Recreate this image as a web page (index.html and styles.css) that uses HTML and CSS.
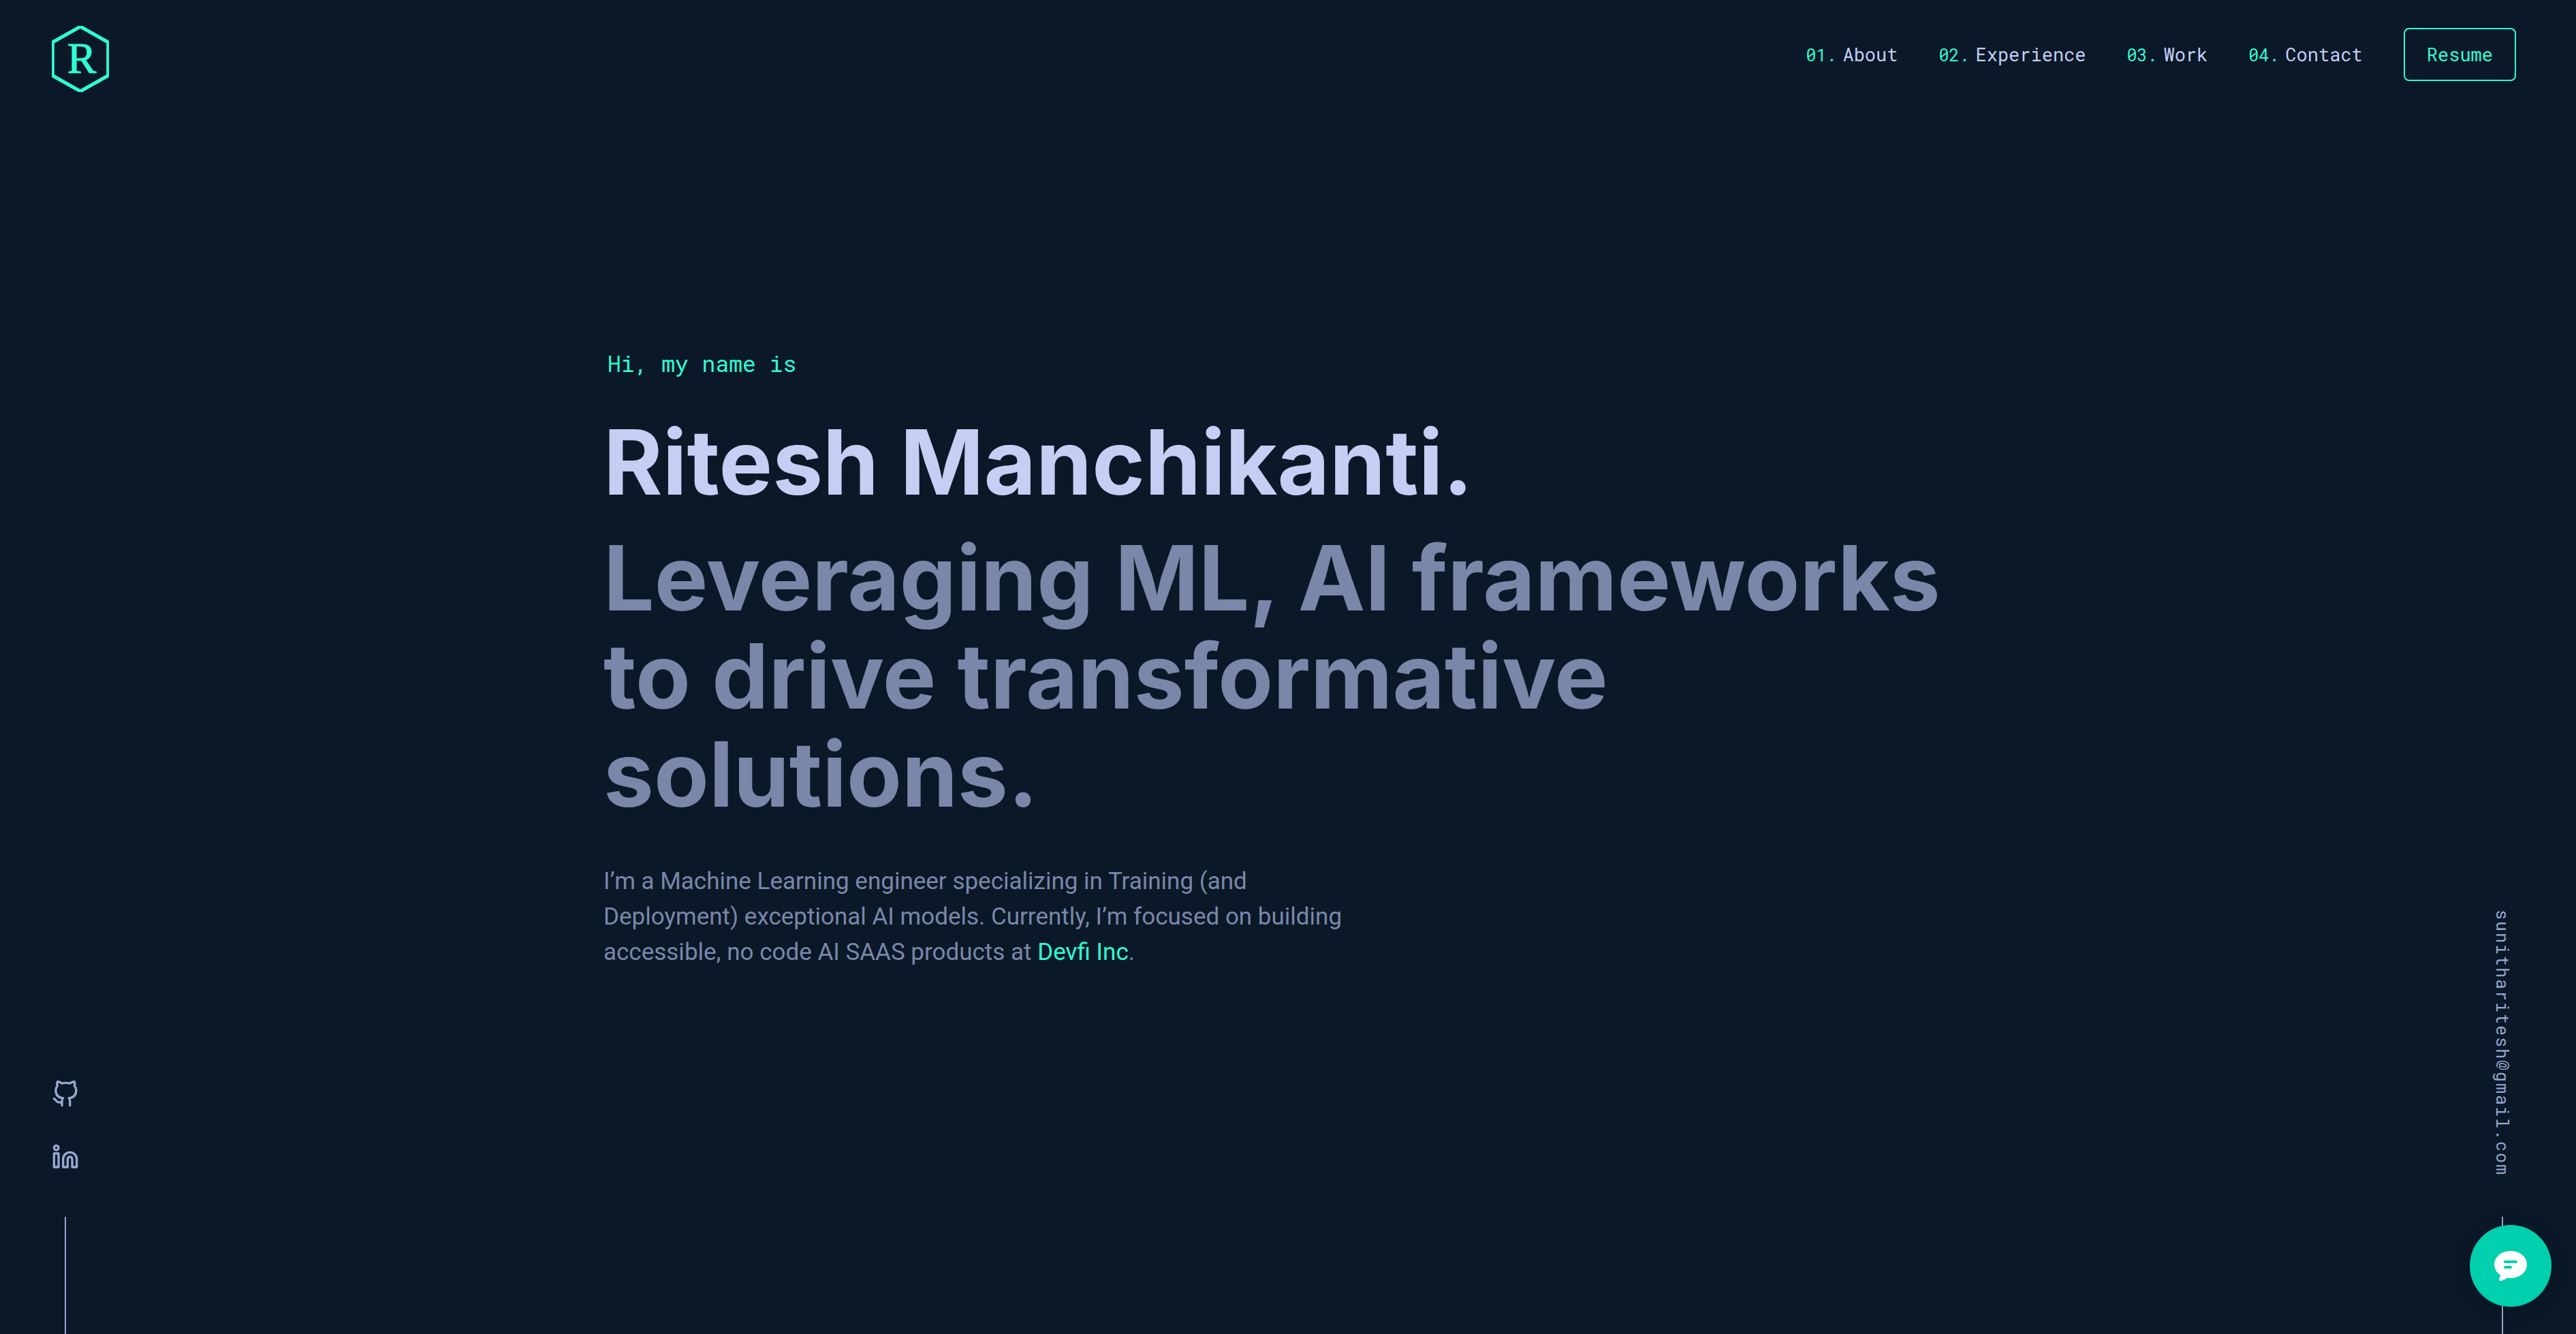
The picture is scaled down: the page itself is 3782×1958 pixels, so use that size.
FILE: index.html
```
<!DOCTYPE html>
<html lang="en">
<head>
  <meta charset="utf-8">
  <meta name="viewport" content="width=device-width, initial-scale=1">
  <title>Ritesh Manchikanti</title>
  <link rel="stylesheet" href="styles.css">
</head>
<body>
  <header class="site-header">
    <a class="logo" href="#" aria-label="Home">
      <svg viewBox="0 0 84 97" width="84" height="97">
        <polygon points="42,1 82.7,24 82.7,73 42,96 1.3,73 1.3,24" fill="none" stroke="currentColor" stroke-width="5"/>
        <text class="logo-letter" x="44" y="69" text-anchor="middle">R</text>
      </svg>
    </a>
    <nav class="site-nav">
      <ol class="nav-list">
        <li><a class="nav-link" href="#about"><span class="nav-number">01.</span>About</a></li>
        <li><a class="nav-link" href="#experience"><span class="nav-number">02.</span>Experience</a></li>
        <li><a class="nav-link" href="#work"><span class="nav-number">03.</span>Work</a></li>
        <li><a class="nav-link" href="#contact"><span class="nav-number">04.</span>Contact</a></li>
      </ol>
      <a class="resume-button" href="#resume">Resume</a>
    </nav>
  </header>

  <main class="hero">
    <p class="greeting">Hi, my name is</p>
    <h1 class="headline">Ritesh Manchikanti.</h1>
    <h2 class="headline tagline">Leveraging ML, AI frameworks to drive transformative solutions.</h2>
    <p class="intro">I’m a Machine Learning engineer specializing in Training (and Deployment) exceptional AI models. Currently, I’m focused on building accessible, no code AI SAAS products at <a class="intro-link" href="#devfi">Devfi Inc</a>.</p>
  </main>

  <aside class="rail rail-left">
    <a class="social" href="#github" aria-label="GitHub">
      <svg class="icon" viewBox="0 0 24 24">
        <path d="M9 19c-5 1.5-5-2.5-7-3m14 6v-3.87a3.37 3.37 0 0 0-.94-2.61c3.14-.35 6.44-1.54 6.44-7A5.44 5.44 0 0 0 20 4.77 5.07 5.07 0 0 0 19.91 1S18.73.65 16 2.48a13.38 13.38 0 0 0-7 0C6.27.65 5.09 1 5.09 1A5.07 5.07 0 0 0 5 4.77a5.44 5.44 0 0 0-1.5 3.78c0 5.42 3.3 6.61 6.44 7A3.37 3.37 0 0 0 9 18.13V22"/>
      </svg>
    </a>
    <a class="social" href="#linkedin" aria-label="LinkedIn">
      <svg class="icon" viewBox="0 0 24 24">
        <path d="M16 8a6 6 0 0 1 6 6v7h-4v-7a2 2 0 0 0-2-2 2 2 0 0 0-2 2v7h-4v-7a6 6 0 0 1 6-6z"/>
        <rect x="2" y="9" width="4" height="12"/>
        <circle cx="4" cy="4" r="2"/>
      </svg>
    </a>
  </aside>

  <aside class="rail rail-right">
    <a class="email" href="mailto:sunitharitesh@gmail.com">sunitharitesh@gmail.com</a>
  </aside>

  <button class="chat-button" type="button" aria-label="Open chat">
    <svg viewBox="0 0 48 44" width="48" height="44">
      <ellipse cx="24" cy="20" rx="24" ry="20" fill="#fff"/>
      <path d="M9.500 35.500C8.500 38 7 40 7 42c0 2 2 2.500 4 1.800 3-.8 5-2.300 8-4.300z" fill="#fff"/>
      <rect x="14" y="14" width="20" height="4" rx="2" fill="#00d0ae"/>
      <rect x="14" y="22" width="12" height="4" rx="2" fill="#00d0ae"/>
    </svg>
  </button>
</body>
</html>
```
FILE: styles.css
```
:root {
  --navy: #0a1828;
  --green: #2effd4;
  --lightest: #c4cff3;
  --light: #9aa7d0;
  --slate: #7b87a8;
  --sans: Inter, "Liberation Sans", sans-serif;
  --body: Roboto, "Liberation Sans", sans-serif;
  --mono: "Roboto Mono", "Liberation Mono", monospace;
}

* {
  box-sizing: border-box;
}

body {
  margin: 0;
  min-height: 100vh;
  display: grid;
  grid-template-columns: auto 1fr auto;
  grid-template-rows: auto 1fr;
  background: var(--navy);
  color: var(--slate);
  font-family: var(--body);
}

a {
  color: inherit;
  text-decoration: none;
}

/* Header */
.site-header {
  grid-column: 1 / -1;
  grid-row: 1;
  z-index: 1;
  display: flex;
  justify-content: space-between;
  align-items: flex-start;
  padding: 38px 88px 0 76px;
}

.logo {
  display: flex;
  color: var(--green);
}

.logo-letter {
  fill: currentColor;
  stroke: currentColor;
  stroke-width: 1px;
  font: 64px "Liberation Serif", serif;
}

.site-nav {
  display: flex;
  align-items: center;
  gap: 60px;
  padding-top: 3px;
  font-family: var(--mono);
  font-size: 27px;
  line-height: 34px;
}

.nav-list {
  display: flex;
  gap: 60px;
  margin: 0;
  padding: 0;
  list-style: none;
}

.nav-link {
  color: var(--lightest);
}

.nav-number {
  margin-right: 9px;
  color: var(--green);
  font-size: 25px;
}

.resume-button {
  padding: 20px 32px;
  border: 2px solid var(--green);
  border-radius: 8px;
  color: var(--green);
}

/* Hero */
.hero {
  grid-column: 1 / -1;
  grid-row: 1 / -1;
  align-self: center;
  justify-self: center;
  width: 100%;
  max-width: 2010px;
  padding-bottom: 22px;
}

.greeting {
  margin: 0 0 53px 6px;
  color: var(--green);
  font-family: var(--mono);
  font-size: 33px;
  line-height: 40px;
}

.headline {
  margin: 0;
  color: var(--lightest);
  font-family: var(--sans);
  font-size: 132px;
  font-weight: 700;
  line-height: 144px;
}

.tagline {
  margin-top: 26px;
  color: var(--slate);
}

.intro {
  max-width: 1092px;
  margin: 60px 0 0;
  font-size: 35px;
  line-height: 52px;
}

.intro-link {
  color: var(--green);
}

/* Side rails */
.rail {
  grid-row: 2;
  align-self: end;
  z-index: 1;
  display: flex;
  flex-direction: column;
  align-items: center;
  color: var(--light);
}

.rail::after {
  content: "";
  width: 2px;
  height: 172px;
  background: currentColor;
}

.rail-left {
  grid-column: 1;
  gap: 52px;
  padding-left: 76px;
}

.rail-left::after {
  margin-top: 16px;
}

.rail-right {
  grid-column: 3;
  gap: 60px;
  padding-right: 88px;
}

.social {
  display: flex;
}

.icon {
  width: 40px;
  height: 40px;
  fill: none;
  stroke: currentColor;
  stroke-width: 2;
  stroke-linecap: round;
  stroke-linejoin: round;
}

.email {
  writing-mode: vertical-rl;
  font-family: var(--mono);
  font-size: 25px;
  line-height: 40px;
  letter-spacing: 2px;
}

/* Floating chat button */
.chat-button {
  position: fixed;
  right: 36px;
  bottom: 40px;
  z-index: 2;
  display: flex;
  align-items: center;
  justify-content: center;
  width: 120px;
  height: 120px;
  padding: 0;
  border: 0;
  border-radius: 50%;
  background: #00d0ae;
  box-shadow: 0 4px 24px rgba(0, 0, 0, 0.15);
}
```
